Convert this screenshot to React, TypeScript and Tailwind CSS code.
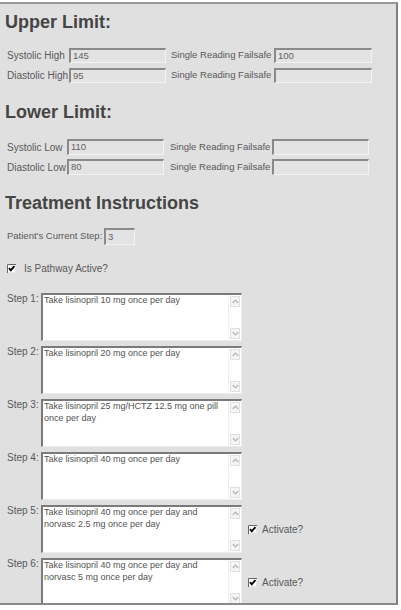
import React from 'react';

type LimitRow = { label: string; value: string; failsafe: string };

const upperRows: LimitRow[] = [
  { label: 'Systolic High', value: '145', failsafe: '100' },
  { label: 'Diastolic High', value: '95', failsafe: '' },
];

const lowerRows: LimitRow[] = [
  { label: 'Systolic Low', value: '110', failsafe: '' },
  { label: 'Diastolic Low', value: '80', failsafe: '' },
];

type Step = { lines: string[]; activate?: boolean };

const steps: Step[] = [
  { lines: ['Take lisinopril 10 mg once per day'] },
  { lines: ['Take lisinopril 20 mg once per day'] },
  { lines: ['Take lisinopril 25 mg/HCTZ 12.5 mg one pill', 'once per day'] },
  { lines: ['Take lisinopril 40 mg once per day'] },
  { lines: ['Take lisinopril 40 mg once per day and', 'norvasc 2.5 mg once per day'], activate: true },
  { lines: ['Take lisinopril 40 mg once per day and', 'norvasc 5 mg once per day'], activate: true },
];

const Heading = ({ children, className }: { children: React.ReactNode; className: string }) => (
  <h2 className={`pl-[5px] text-[18px] leading-[20px] font-bold text-[#454545] ${className}`}>{children}</h2>
);

// disabled-looking text box with the old inset border
const Field = ({ value, className }: { value: string; className: string }) => (
  <div
    className={`flex items-center border-t-2 border-l-2 border-r border-b border-t-[#8a8a8a] border-l-[#8a8a8a] border-r-[#f3f3f3] border-b-[#f3f3f3] bg-[#e3e3e3] pl-[2px] text-[9.5px] text-[#626262] ${className}`}
  >
    {value}
  </div>
);

const CheckBox = () => (
  <svg width="9" height="9" viewBox="0 0 9 9" className="shrink-0">
    <rect x="0" y="0" width="9" height="9" fill="#ffffff" />
    <path d="M0.5 9V0.5H9" fill="none" stroke="#666666" strokeWidth="1" />
    <path d="M8.5 1V8.5H1" fill="none" stroke="#e6e6e6" strokeWidth="1" />
    <path d="M2 4.2L3.8 6.3L7.4 2.1" fill="none" stroke="#000000" strokeWidth="1.9" />
  </svg>
);

const Chevron = ({ up }: { up?: boolean }) => (
  <svg width="7" height="5" viewBox="0 0 7 5">
    <path d={up ? 'M0.8 4L3.5 1.2L6.2 4' : 'M0.8 1L3.5 3.8L6.2 1'} fill="none" stroke="#b4b4b4" strokeWidth="1.2" />
  </svg>
);

const StepBox = ({ lines }: { lines: string[] }) => (
  <div className="flex h-[48px] w-[201px] shrink-0 border-t-2 border-l-2 border-r border-b border-t-[#7a7a7a] border-l-[#7a7a7a] border-r-[#ececec] border-b-[#ececec] bg-white">
    <div className="min-w-0 flex-1 pl-px text-[9px] leading-[11.5px] text-[#525252]">
      {lines.map((line) => (
        <div key={line}>{line}</div>
      ))}
    </div>
    <div className="flex w-[13px] shrink-0 flex-col justify-between border-l border-[#f0f0f0] px-px py-px">
      <div className="flex h-[11px] items-center justify-center border border-[#e0e0e0] bg-[#f5f5f5]">
        <Chevron up />
      </div>
      <div className="flex h-[11px] items-center justify-center border border-[#e0e0e0] bg-[#f5f5f5]">
        <Chevron />
      </div>
    </div>
  </div>
);

export default function App() {
  return (
    <div className="min-h-screen bg-white font-['Liberation_Sans',Arial,sans-serif]">
      <div className="mt-[2px] h-[603px] w-[398px] overflow-hidden border-t-2 border-r-2 border-b-2 border-t-[#9a9a9a] border-r-[#808080] border-b-[#8a8a8a] bg-[#e0e0e0] text-[#595959]">
        <Heading className="mt-[8px]">Upper Limit:</Heading>
        <div className="mt-[16px] grid grid-cols-[62px_97px_108px_98px] gap-y-[5px] pl-[7px]">
          {upperRows.map((row) => (
            <React.Fragment key={row.label}>
              <span className="self-center whitespace-nowrap text-[10px]">{row.label}</span>
              <Field value={row.value} className="h-[15px]" />
              <span className="self-center whitespace-nowrap pl-[5px] text-[9.5px]">Single Reading Failsafe</span>
              <Field value={row.failsafe} className="h-[15px]" />
            </React.Fragment>
          ))}
        </div>

        <Heading className="mt-[19px]">Lower Limit:</Heading>
        <div className="mt-[17px] grid grid-cols-[60px_97px_108px_97px] gap-y-[4px] pl-[7px]">
          {lowerRows.map((row) => (
            <React.Fragment key={row.label}>
              <span className="self-center whitespace-nowrap text-[10px]">{row.label}</span>
              <Field value={row.value} className="h-[16px]" />
              <span className="self-center whitespace-nowrap pl-[6px] text-[9.5px]">Single Reading Failsafe</span>
              <Field value={row.failsafe} className="h-[16px]" />
            </React.Fragment>
          ))}
        </div>

        <Heading className="mt-[18px]">Treatment Instructions</Heading>
        <div className="mt-[15px] flex items-center pl-[7px]">
          <span className="w-[97px] whitespace-nowrap text-[9.5px]">Patient's Current Step:</span>
          <Field value="3" className="h-[17px] w-[31px]" />
        </div>

        <label className="mt-[19px] flex h-[9px] items-center gap-[8px] pl-[7px] text-[10px]">
          <CheckBox />
          <span>Is Pathway Active?</span>
        </label>

        <div className="mt-[20px] flex flex-col gap-[5px] pl-[7px]">
          {steps.map((step, i) => (
            <div key={i} className="flex">
              <span className="w-[34px] shrink-0 text-[10px] leading-[12px]">Step {i + 1}:</span>
              <StepBox lines={step.lines} />
              {step.activate && (
                <label className="ml-[6px] flex items-center gap-[5px] text-[10px]">
                  <CheckBox />
                  <span>Activate?</span>
                </label>
              )}
            </div>
          ))}
        </div>
      </div>
    </div>
  );
}
